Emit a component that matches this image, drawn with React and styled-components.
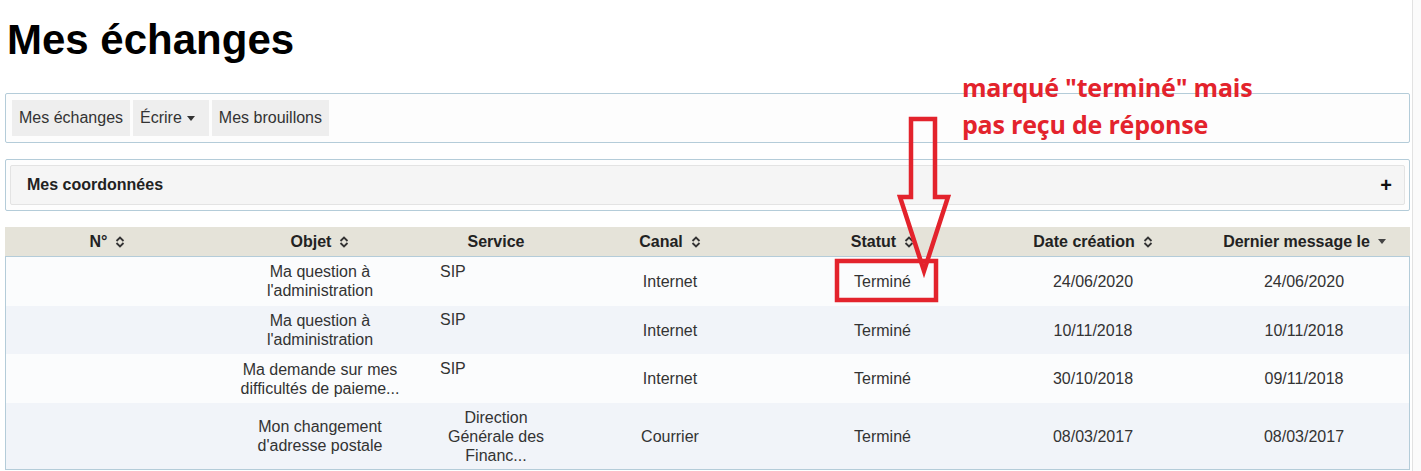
import React from "react";
import styled, { createGlobalStyle } from "styled-components";

const GlobalStyle = createGlobalStyle`
  html, body {
    margin: 0;
    padding: 0;
    background: #ffffff;
  }
  body {
    font-family: "Liberation Sans", Arial, sans-serif;
    color: #333333;
  }
`;

const Page = styled.div`
  position: relative;
  display: flex;
  width: 1421px;
  min-height: 471px;
`;

const Main = styled.div`
  width: 1405px;
  padding-left: 5px;
`;

const ScrollStrip = styled.div`
  margin-left: 2px;
  width: 8px;
  border-left: 1px solid #e2e2e2;
  background: #fbfbfb;
`;

const Title = styled.h1`
  margin: 0;
  padding: 16px 0 0 2px;
  height: 93px;
  box-sizing: border-box;
  font-size: 42px;
  font-weight: bold;
  line-height: 48px;
  color: #000000;
`;

const Panel = styled.div`
  border: 1px solid #b4ccd9;
  border-radius: 2px;
  background: #fdfdfd;
  padding: ${(p) => p.$pad || "6px"};
  margin-bottom: ${(p) => p.$gap || "16px"};
`;

const NavBar = styled.div`
  display: flex;
  gap: 3px;
`;

const NavButton = styled.div`
  display: flex;
  align-items: center;
  gap: 5px;
  height: 36px;
  padding: 0 ${(p) => (p.$dropdown ? "14px" : "7px")} 0 7px;
  background: #eeeeee;
  font-size: 16px;
  color: #333333;
`;

const Caret = styled.span`
  display: inline-block;
  width: 0;
  height: 0;
  border-left: 4px solid transparent;
  border-right: 4px solid transparent;
  border-top: 5px solid ${(p) => p.$color || "#333333"};
`;

const Accordion = styled.div`
  display: flex;
  align-items: center;
  justify-content: space-between;
  height: 40px;
  box-sizing: border-box;
  padding: 0 12px 0 16px;
  background: #f5f5f5;
  border: 1px solid #e3e3e3;
  border-radius: 2px;
  font-size: 16px;
  font-weight: bold;
  color: #222222;
`;

const Plus = styled.span`
  font-size: 20px;
  font-weight: 900;
  color: #111111;
  line-height: 1;
`;

const Table = styled.div`
  display: grid;
  grid-template-columns: 205px 220px 132px 216px 209px 212px 211px;
`;

const Head = styled.div`
  display: contents;
`;

const HeadCell = styled.div`
  display: flex;
  align-items: center;
  justify-content: center;
  gap: 8px;
  height: 29px;
  background: #e5e3d9;
  border-bottom: 1px solid #b4ccd9;
  font-size: 16px;
  font-weight: bold;
  color: #222222;
`;

const Body = styled.div`
  grid-column: 1 / -1;
  display: grid;
  grid-template-columns: subgrid;
  border: 1px solid #b4ccd9;
  border-top: none;
`;

const Row = styled.div`
  grid-column: 1 / -1;
  display: grid;
  grid-template-columns: subgrid;
  background: ${(p) => (p.$alt ? "#f1f4f9" : "#fbfcfd")};
  min-height: 48.7px;
`;

const Cell = styled.div`
  display: flex;
  align-items: ${(p) => (p.$top ? "flex-start" : "center")};
  justify-content: ${(p) => (p.$left ? "flex-start" : "center")};
  padding: ${(p) => p.$pad || "4.5px 4px"};
  font-size: 16px;
  line-height: 19px;
  color: #333333;
  text-align: center;
`;

const Wrap = styled.span`
  display: block;
  max-width: ${(p) => p.$w || "170px"};
  text-align: ${(p) => (p.$left ? "left" : "center")};
`;

const Annotation = styled.div`
  position: absolute;
  left: 962px;
  top: 69px;
  font-family: "Open Sans", "Noto Sans", sans-serif;
  font-weight: 700;
  font-size: 25px;
  line-height: 37px;
  color: #e3232c;
  letter-spacing: -0.2px;
`;

const Overlay = styled.svg`
  position: absolute;
  left: 0;
  top: 0;
  pointer-events: none;
`;

function SortIcon() {
  return (
    <svg width="10" height="12" viewBox="0 0 10 12">
      <path d="M1.5 5 L5 1.5 L8.5 5" fill="none" stroke="#333" strokeWidth="1.8" />
      <path d="M1.5 7 L5 10.5 L8.5 7" fill="none" stroke="#333" strokeWidth="1.8" />
    </svg>
  );
}

const columns = [
  { label: "N°", sort: true },
  { label: "Objet", sort: true },
  { label: "Service" },
  { label: "Canal", sort: true },
  { label: "Statut", sort: true },
  { label: "Date création", sort: true },
  { label: "Dernier message le", caret: true },
];

const rows = [
  { objet: "Ma question à l'administration", service: "SIP", canal: "Internet", statut: "Terminé", cree: "24/06/2020", dernier: "24/06/2020" },
  { objet: "Ma question à l'administration", service: "SIP", canal: "Internet", statut: "Terminé", cree: "10/11/2018", dernier: "10/11/2018" },
  { objet: "Ma demande sur mes difficultés de paieme...", service: "SIP", canal: "Internet", statut: "Terminé", cree: "30/10/2018", dernier: "09/11/2018" },
  { objet: "Mon changement d'adresse postale", service: "Direction Générale des Financ...", canal: "Courrier", statut: "Terminé", cree: "08/03/2017", dernier: "08/03/2017", centered: true },
];

export default function App() {
  return (
    <Page>
      <GlobalStyle />
      <Main>
        <Title>Mes échanges</Title>

        <Panel $pad="6px 6px">
          <NavBar>
            <NavButton>Mes échanges</NavButton>
            <NavButton $dropdown>
              Écrire <Caret />
            </NavButton>
            <NavButton>Mes brouillons</NavButton>
          </NavBar>
        </Panel>

        <Panel $pad="5px 4px 5px 4px">
          <Accordion>
            <span>Mes coordonnées</span>
            <Plus>+</Plus>
          </Accordion>
        </Panel>

        <Table>
          <Head>
            {columns.map((c) => (
              <HeadCell key={c.label}>
                {c.label}
                {c.sort && <SortIcon />}
                {c.caret && <Caret $color="#444" />}
              </HeadCell>
            ))}
          </Head>
          <Body>
            {rows.map((r, i) => (
              <Row key={i} $alt={i % 2 === 1}>
                <Cell />
                <Cell>
                  <Wrap>{r.objet}</Wrap>
                </Cell>
                <Cell $top $left={!r.centered} $pad={r.centered ? "4.5px 14px" : "4.5px 4px 4.5px 10px"}>
                  <Wrap $w="112px" $left={!r.centered}>{r.service}</Wrap>
                </Cell>
                <Cell>{r.canal}</Cell>
                <Cell>{r.statut}</Cell>
                <Cell>{r.cree}</Cell>
                <Cell>{r.dernier}</Cell>
              </Row>
            ))}
          </Body>
        </Table>
      </Main>
      <ScrollStrip />

      <Annotation>
        marqué "terminé" mais
        <br />
        pas reçu de réponse
      </Annotation>
      <Overlay width="1421" height="471">
        <path
          d="M911 119 L935 119 L935 197 L948 197 L924 271 L900 197 L911 197 Z"
          fill="none"
          stroke="#e3232c"
          strokeWidth="4.5"
          strokeLinejoin="miter"
        />
        <rect x="837" y="261" width="99" height="39" fill="none" stroke="#e3232c" strokeWidth="4.5" />
      </Overlay>
    </Page>
  );
}
